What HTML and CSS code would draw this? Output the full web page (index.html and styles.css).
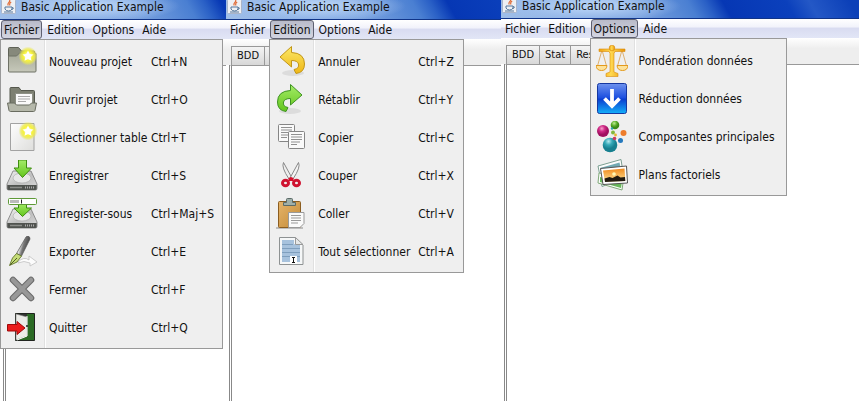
FILE: index.html
```html
<!DOCTYPE html>
<html lang="fr">
<head>
<meta charset="utf-8">
<title>Basic Application Example</title>
<link rel="stylesheet" href="styles.css">
</head>
<body>
<svg class="defs" width="0" height="0" aria-hidden="true">
  <defs>
    <linearGradient id="folder" x1="0" y1="0" x2="0" y2="1"><stop offset="0" stop-color="#a6a999"/><stop offset="1" stop-color="#c6c8ba"/></linearGradient>
    <linearGradient id="page" x1="0" y1="0" x2="1" y2="1"><stop offset="0" stop-color="#fdfdfd"/><stop offset="1" stop-color="#dededc"/></linearGradient>
    <linearGradient id="drive" x1="0" y1="0" x2="1" y2="1"><stop offset="0" stop-color="#f4f4f4"/><stop offset=".5" stop-color="#bfbfbf"/><stop offset="1" stop-color="#dadada"/></linearGradient>
    <linearGradient id="green" x1="0" y1="0" x2="0" y2="1"><stop offset="0" stop-color="#a4ec68"/><stop offset="1" stop-color="#63c51c"/></linearGradient>
    <linearGradient id="yellow" x1="0" y1="0" x2="0" y2="1"><stop offset="0" stop-color="#fbe868"/><stop offset="1" stop-color="#efb716"/></linearGradient>
    <linearGradient id="gold" x1="0" y1="0" x2="1" y2="0"><stop offset="0" stop-color="#f0a010"/><stop offset=".45" stop-color="#ffd950"/><stop offset="1" stop-color="#e89408"/></linearGradient>
    <linearGradient id="blue" x1="0" y1="0" x2="0" y2="1"><stop offset="0" stop-color="#6e92ee"/><stop offset=".48" stop-color="#1b4fe0"/><stop offset=".52" stop-color="#0a3ed0"/><stop offset="1" stop-color="#12b0fa"/></linearGradient>
    <linearGradient id="board" x1="0" y1="0" x2="1" y2="1"><stop offset="0" stop-color="#e6b469"/><stop offset="1" stop-color="#c28a38"/></linearGradient>
    <linearGradient id="sunset" x1="0" y1="0" x2="0" y2="1"><stop offset="0" stop-color="#f08a1c"/><stop offset="1" stop-color="#ffe59a"/></linearGradient>
    <linearGradient id="barrel" x1="0" y1="0" x2="1" y2=".4"><stop offset="0" stop-color="#555"/><stop offset=".4" stop-color="#e4e4e4"/><stop offset=".6" stop-color="#777"/><stop offset="1" stop-color="#3c3c3c"/></linearGradient>
    <radialGradient id="glow"><stop offset="0" stop-color="#fffff0"/><stop offset=".5" stop-color="#f6f23c"/><stop offset=".75" stop-color="#eeea4a" stop-opacity=".75"/><stop offset="1" stop-color="#e8e860" stop-opacity="0"/></radialGradient>
    <radialGradient id="pink" cx=".4" cy=".3"><stop offset="0" stop-color="#f7a0cc"/><stop offset=".5" stop-color="#cf2a86"/><stop offset="1" stop-color="#a01060"/></radialGradient>
    <radialGradient id="teal" cx=".4" cy=".25"><stop offset="0" stop-color="#b4e8ee"/><stop offset=".5" stop-color="#35a9b8"/><stop offset="1" stop-color="#178090"/></radialGradient>
    <radialGradient id="lime" cx=".4" cy=".3"><stop offset="0" stop-color="#c0eb96"/><stop offset=".6" stop-color="#5cb02c"/><stop offset="1" stop-color="#3b8a18"/></radialGradient>
    <g id="star"><circle r="9.500" fill="url(#glow)"/><path d="M0-5.500 1.700-2 5.500-1.600 2.700.9 3.500 4.800 0 2.900-3.500 4.800-2.700.9-5.500-1.600-1.700-2z" fill="#fff"/></g>
    <g id="disk"><path d="M7 11h18l6 13v4.500q0 1.500-1.500 1.500h-27Q1 30 1 28.500V24z" fill="url(#drive)" stroke="#777" stroke-width=".8"/><ellipse cx="16" cy="18" rx="9" ry="5" fill="#e8e8e8" stroke="#aaa" stroke-width=".6"/><path d="M1.300 25h29.400v3.500q0 1.500-1.500 1.500H2.800q-1.500 0-1.500-1.500z" fill="#50534f"/><path d="M4 27.500h12" stroke="#8b8d89" stroke-width="1.500"/><path d="M19 27.500h9" stroke="#aaa" stroke-width="2" stroke-dasharray="1 1"/></g>
    <g id="java"><rect x=".5" y=".5" width="14" height="14" rx="1" fill="#eef0f4" stroke="#aab4c8"/><path d="M8.500 1c1.500 2-3 2.800-1.200 5.500M10.200 3C8 4.200 8.500 5.500 9 6.500" fill="none" stroke="#e06a35" stroke-width="1.200"/><path d="M4 8h7v2q-1 2-3.500 2T4 10zM11 8.500q2 0 1 1.500l-1.500.7M3 13h9" fill="none" stroke="#54779c"/></g>
  </defs>
</svg>

<main class="windows">
  <section class="window">
    <header class="titlebar"><svg class="app-icon" viewBox="0 0 15 15" aria-hidden="true"><use href="#java"/></svg><h1 class="title">Basic Application Example</h1></header>
    <nav class="menubar">
      <div class="entry"><button class="menu-title open" aria-expanded="true">Fichier</button>
        <ul class="menu menu-file">
          <li><button class="item"><svg class="icon" viewBox="0 0 32 32" aria-hidden="true"><path d="M2.500 2.500q0-1 1-1h9l3 3.500h12q1 0 1 1v6h-26z" fill="#86897b" stroke="#5f6257"/><path d="M2.500 25V10h8l3-3h15.500q1 0 1 1v17q0 1-1 1H3.500q-1 0-1-1z" fill="url(#folder)" stroke="#6f7267"/><use href="#star" x="22" y="10"/></svg><span>Nouveau projet</span><kbd>Ctrl+N</kbd></button></li>
          <li><button class="item"><svg class="icon" viewBox="0 0 32 32" aria-hidden="true"><path d="M4 20V4.500q0-1 1-1h8l2 3h12.500q1 0 1 1V20z" fill="#7d8072" stroke="#55584d"/><path d="M9.500 9.500h17v12h-17z" fill="#fafafa" stroke="#8c8f84"/><path d="M12 12.500h12M12 15h12M12 17.500h8" stroke="#aaa"/><path d="M1.500 19h7l2 2h13l2-2h5L29 26.500q-.3 1-1.500 1h-23q-1 0-1.500-1z" fill="#b5b8aa" stroke="#696c60"/></svg><span>Ouvrir projet</span><kbd>Ctrl+O</kbd></button></li>
          <li><button class="item"><svg class="icon" viewBox="0 0 32 32" aria-hidden="true"><path d="M4.500 1.500h23.500v27h-23.500z" fill="url(#page)" stroke="#a2a2a2"/><use href="#star" x="22" y="9"/></svg><span>Sélectionner table</span><kbd>Ctrl+T</kbd></button></li>
          <li><button class="item"><svg class="icon" viewBox="0 0 32 32" aria-hidden="true"><use href="#disk"/><path d="M12.500 0h8v8h5L16.500 17.500 8 8h4.500z" fill="url(#green)" stroke="#3f8d10"/></svg><span>Enregistrer</span><kbd>Ctrl+S</kbd></button></li>
          <li><button class="item"><svg class="icon" viewBox="0 0 32 32" aria-hidden="true"><use href="#disk"/><path d="M12.500 5h8v5h5l-9 8.500L8 10h4.500z" fill="url(#green)" stroke="#3f8d10"/><rect x="2.500" y=".5" width="28" height="6" rx="1" fill="#fff" stroke="#5f9a38"/><path d="M4 2h9v3H4z" fill="#bbb"/><path d="M15.500 1.500v4" stroke="#222"/></svg><span>Enregister-sous</span><kbd>Ctrl+Maj+S</kbd></button></li>
          <li><button class="item"><svg class="icon" viewBox="0 0 32 32" aria-hidden="true"><path d="M12 26q6-6 11-2v-4l8 6-7 4v-3q-6-3-12 0z" fill="#fcfcfc" stroke="#c2c2c2" stroke-width=".8"/><path d="M20 1q1.500-2 3.500 0l.5 2-8.500 17-5-2.500z" fill="url(#barrel)" stroke="#555" stroke-width=".7"/><path d="M10.500 17.500 15.500 20 11 26 3.500 29.500 6.500 22z" fill="#c5dc78" stroke="#62752b" stroke-width=".9"/><path d="m4 29 7-7" stroke="#4f5d25"/></svg><span>Exporter</span><kbd>Ctrl+E</kbd></button></li>
          <li><button class="item"><svg class="icon" viewBox="0 0 32 32" aria-hidden="true"><path d="m7 6 18 18M25 6 7 24" stroke="#696969" stroke-width="6.500" stroke-linecap="round"/><path d="m7 6 18 18M25 6 7 24" stroke="#989898" stroke-width="4.500" stroke-linecap="round"/></svg><span>Fermer</span><kbd>Ctrl+F</kbd></button></li>
          <li><button class="item"><svg class="icon" viewBox="0 0 32 32" aria-hidden="true"><path d="M9.500 1.500h19v27h-19z" fill="#2c6b25" stroke="#20241f"/><path d="M10 2h11v3L10 27z" fill="#333"/><path d="m10 28 11-4V5L10 2z" fill="#ecece8" stroke="#888" stroke-width=".6"/><path d="M21 4v20l-10 4" fill="none" stroke="#fff"/><path d="M20 14h2" stroke="#222" stroke-width="1.500"/><path d="M1.500 12.500H11V9.500l8 6.500-8 6.500v-3.500H1.500z" fill="#ea1b1b" stroke="#9f0808"/></svg><span>Quitter</span><kbd>Ctrl+Q</kbd></button></li>
        </ul>
      </div>
      <div class="entry"><button class="menu-title">Edition</button></div>
      <div class="entry"><button class="menu-title">Options</button></div>
      <div class="entry"><button class="menu-title">Aide</button></div>
    </nav>
    <div class="tabs"></div>
    <div class="pane"></div>
  </section>

  <section class="window">
    <header class="titlebar"><svg class="app-icon" viewBox="0 0 15 15" aria-hidden="true"><use href="#java"/></svg><h1 class="title">Basic Application Example</h1></header>
    <nav class="menubar">
      <div class="entry"><button class="menu-title">Fichier</button></div>
      <div class="entry"><button class="menu-title open" aria-expanded="true">Edition</button>
        <ul class="menu menu-edit">
          <li><button class="item"><svg class="icon" viewBox="0 0 32 32" aria-hidden="true"><ellipse cx="18" cy="27" rx="11" ry="3" fill="#dcdcdc"/><path d="M5 11 16.500.5v6Q29.500 7 29.500 18q0 8.500-8.500 9.500l-2-4q5.500-1 4.500-5.500-1-3.500-7-3.500V21z" fill="url(#yellow)" stroke="#c29618"/></svg><span>Annuler</span><kbd>Ctrl+Z</kbd></button></li>
          <li><button class="item"><svg class="icon" viewBox="0 0 32 32" aria-hidden="true"><ellipse cx="15" cy="27" rx="11" ry="3" fill="#dcdcdc"/><path d="M27 11 15.500.5v6Q2.500 7 2.500 18q0 8.500 8.500 9.500l2-4Q7.500 22.500 8.500 18q1-3.500 7-3.500V21z" fill="url(#green)" stroke="#3f9323"/></svg><span>Rétablir</span><kbd>Ctrl+Y</kbd></button></li>
          <li><button class="item"><svg class="icon" viewBox="0 0 32 32" aria-hidden="true"><rect x="3.500" y="2.500" width="16" height="17" rx="1" fill="#fafafa" stroke="#858585"/><path d="M6 5.500h11M6 8h11M6 10.500h11M6 13h9M6 15.500h6" stroke="#909090"/><rect x="13.500" y="9.500" width="16" height="17" rx="1" fill="#fafafa" stroke="#858585"/><path d="M16 12.500h11M16 15h11M16 17.500h11M16 20h9M16 22.500h6" stroke="#909090"/></svg><span>Copier</span><kbd>Ctrl+C</kbd></button></li>
          <li><button class="item"><svg class="icon" viewBox="0 0 32 32" aria-hidden="true"><path d="M8.500 2.500Q6 7 14 19l3-1z" fill="#eee" stroke="#888"/><path d="M23.500 2.500Q26 7 18 19l-3-1z" fill="#f4f4f4" stroke="#888"/><path d="m13.500 18 2.500-1 2.500 1v3h-5z" fill="#d8102c"/><g fill="none" stroke="#cf1330" stroke-width="3"><ellipse cx="10.500" cy="23" rx="3" ry="2.800"/><ellipse cx="21.500" cy="23" rx="3" ry="2.800"/></g></svg><span>Couper</span><kbd>Ctrl+X</kbd></button></li>
          <li><button class="item"><svg class="icon" viewBox="0 0 32 32" aria-hidden="true"><path d="M1 30h27" stroke="#bdbdbd" stroke-width="2"/><rect x="3.500" y="3.500" width="22" height="26" rx="1" fill="url(#board)" stroke="#8b5d20"/><path d="M8.500 7.500V4.500h3v-3q0-1 1-1h4q1 0 1 1v3h3v3z" fill="#9fafa9" stroke="#5b6b68"/><path d="M13.500 14.500h15.500v11l-4 4H13.500z" fill="#fafafa" stroke="#999"/><path d="M16 17.500h10M16 20h10M16 22.500h10M16 25h7" stroke="#999"/></svg><span>Coller</span><kbd>Ctrl+V</kbd></button></li>
          <li><button class="item"><svg class="icon" viewBox="0 0 32 32" aria-hidden="true"><path d="M4.500 1.500h16l7.500 7.500v19.500h-23.500z" fill="#f5f7f8" stroke="#8e9293"/><path d="M7 4h12v4h6v18H7z" fill="#a7c2dd"/><path d="M7 8.500h11M7 12.500h18M7 16.500h18M7 20.500h18" stroke="#7f9fbe"/><path d="M20.500 1.500v7H28z" fill="#e5e8e9" stroke="#999"/><path d="M15 20h7v8h-7z" fill="#fff"/><path d="M17 21.500h3M17 26.500h3M18.500 21.500v5" stroke="#111"/></svg><span>Tout sélectionner</span><kbd>Ctrl+A</kbd></button></li>
        </ul>
      </div>
      <div class="entry"><button class="menu-title">Options</button></div>
      <div class="entry"><button class="menu-title">Aide</button></div>
    </nav>
    <div class="tabs"><button class="tab">BDD</button><button class="tab">Stat</button></div>
    <div class="pane"></div>
  </section>

  <section class="window raised">
    <header class="titlebar"><svg class="app-icon" viewBox="0 0 15 15" aria-hidden="true"><use href="#java"/></svg><h1 class="title">Basic Application Example</h1></header>
    <nav class="menubar">
      <div class="entry"><button class="menu-title">Fichier</button></div>
      <div class="entry"><button class="menu-title">Edition</button></div>
      <div class="entry"><button class="menu-title open" aria-expanded="true">Options</button>
        <ul class="menu menu-options">
          <li><button class="item"><svg class="icon" viewBox="0 0 32 32" aria-hidden="true"><path d="M6 5 1.500 21M6 5l4.500 16M26 5l-4.500 16M26 5l4.500 16" fill="none" stroke="#d9a050" stroke-width=".8"/><path d="M0 20.500h11q-.5 5-5.500 5t-5.500-5zM21 20.500h11q-.5 5-5.500 5t-5.500-5z" fill="#fde29a" stroke="#e39a1c"/><path d="M3 4h10q3 1.500 6 0h10v2.500H19l-1 2v18.500l4 1.500v3h-12v-3l4-1.500V8.500l-1-2H3z" fill="url(#gold)" stroke="#d98a0a" stroke-width=".6"/><circle cx="16" cy="3" r="2.800" fill="url(#gold)" stroke="#d98a0a" stroke-width=".6"/></svg><span>Pondération données</span></button></li>
          <li><button class="item"><svg class="icon" viewBox="0 0 32 32" aria-hidden="true"><rect x="1.500" y="0.500" width="29" height="30" rx="2" fill="url(#blue)" stroke="#1537a0"/><path d="M16 6v16M8.500 15.500 16 23l7.500-7.500" fill="none" stroke="#fff" stroke-width="3.800"/></svg><span>Réduction données</span></button></li>
          <li><button class="item"><svg class="icon" viewBox="0 0 32 32" aria-hidden="true"><circle cx="7" cy="10" r="6" fill="url(#pink)"/><circle cx="19" cy="4" r="4.300" fill="url(#lime)"/><circle cx="14" cy="24" r="7.300" fill="url(#teal)"/><circle cx="27.500" cy="12" r="3" fill="#ee7d2c"/><circle cx="24.500" cy="19.500" r="2.500" fill="#2579bd"/><circle cx="17" cy="11.500" r="2" fill="#84b83d"/><circle cx="19.500" cy="14" r="1.400" fill="#e7b62e"/><circle cx="18.500" cy="17.500" r="1.800" fill="#c83b62"/><circle cx="16" cy="7.500" r="1.200" fill="#2aa3ae"/></svg><span>Composantes principales</span></button></li>
          <li><button class="item"><svg class="icon" viewBox="0 0 32 32" aria-hidden="true"><path d="m2 7 23-6.500 3 19-22 8z" fill="#fcfcfc" stroke="#7b9f91"/><path d="m4 9 19.500-5.500 1 5L6 14z" fill="#72aab3"/><path d="m3 14 25 3-2 14-24-7z" fill="#fcfcfc" stroke="#80a978"/><path d="m4 18 22 5-1 6-21-6z" fill="#69b95a"/><path d="m4.500 9.500 26-2.500 1 17-24.500 1.500z" fill="#fff" stroke="#555"/><path d="m7 11.500 21.500-2 .8 12.500L9 23z" fill="url(#sunset)"/><path d="m8.500 19.500 5-1.500 3 1 5-2.500 3 2 4.500-.5.300 4L9 23z" fill="#211a10"/><circle cx="18" cy="15" r="1.800" fill="#fff7b4"/></svg><span>Plans factoriels</span></button></li>
        </ul>
      </div>
      <div class="entry"><button class="menu-title">Aide</button></div>
    </nav>
    <div class="tabs"><button class="tab">BDD</button><button class="tab">Stat</button><button class="tab">Res</button></div>
    <div class="pane"></div>
  </section>
</main>
</body>
</html>
```
FILE: styles.css
```css
* {
  box-sizing: border-box;
}

body {
  margin: 0;
  background: #fff;
  color: #111;
  font: 12px/16px "DejaVu Sans Condensed", "DejaVu Sans", sans-serif;
}

button {
  margin: 0;
  border: 0;
  background: none;
  color: inherit;
  font: inherit;
  white-space: nowrap;
}

.defs {
  position: absolute;
}

.windows {
  display: grid;
  grid-template-columns: 226fr 275fr 358fr;
  height: calc(100vh - 6px);
}

.window {
  display: flex;
  flex-direction: column;
  min-width: 0;
}

.titlebar {
  display: flex;
  align-items: flex-end;
  gap: 5px;
  height: 20px;
  padding: 0 1px 5px;
  border-bottom: 1px solid #103488;
  background:
    radial-gradient(ellipse 90px 16px at 90px 6px, #b4d0f4 20%, #a4c4f080 70%, transparent),
    linear-gradient(60deg, #a0bfe9 0, #7aa2df 120px, #4a7fd2 170px, #2a60c6 185px, #0637b4 200px, #0b40bc 255px, #2458c6 275px, #0c40b8 310px, #0c40b8 320px, #2c60cc 335px, #1c50c0 100%);
  overflow: hidden;
}

.raised .titlebar {
  height: 19px;
}

.app-icon {
  flex: none;
  width: 15px;
  height: 15px;
}

.title {
  margin: 0;
  font-size: 12px;
  font-weight: 400;
  line-height: 13px;
  white-space: nowrap;
}

.menubar {
  display: flex;
  gap: 1px;
  height: 19px;
  background: linear-gradient(#fff, #f2f3fb 40%, #d9dcf1 50%, #e2e6f6);
}

.entry {
  position: relative;
  padding: 0 0 0 1px;
}

.menu-title {
  display: block;
  height: 19px;
  padding: 0 2px;
  border: 1px solid transparent;
  border-radius: 3px;
}

.menu-title.open {
  border-color: #5e6070;
  background: linear-gradient(#b9bbc9, #d3d5e2);
}

.menu {
  position: absolute;
  z-index: 1;
  top: 100%;
  left: 0;
  margin: 0;
  padding: 3px 0 1px;
  border: 1px solid #999;
  background: linear-gradient(90deg, #efefef 43px, #e0e0e0 43px 44px, #fff 44px 45px, #efefef 45px);
  list-style: none;
}

.menu-file {
  width: 223px;
}

.menu-edit {
  width: 195px;
}

.menu-options {
  width: 197px;
}

.item {
  display: grid;
  grid-template-columns: 32px 91px 1fr;
  column-gap: 11px;
  align-items: center;
  width: 100%;
  height: 38px;
  padding: 0 5px;
  text-align: left;
}

.menu-edit .item {
  grid-template-columns: 32px 89px 1fr;
}

.menu-options .item {
  grid-template-columns: 32px 1fr;
}

.icon {
  width: 32px;
  height: 32px;
}

kbd {
  font: inherit;
}

.tabs {
  display: flex;
  align-items: flex-end;
  height: 26px;
  padding-left: 5px;
  background: linear-gradient(#fff, #eee 40%);
}

.tab {
  height: 19px;
  padding: 0 5px;
  border: 1px solid #999;
  border-bottom: 0;
  background: linear-gradient(#f4f4f4, #d8d8d8);
  font-size: 11px;
}

.tab + .tab {
  margin-left: -1px;
}

.pane {
  flex: 1;
  margin-left: 3px;
  border-top: 1px solid #999;
  border-left: 3px double #888;
  background: #fff;
}
```
